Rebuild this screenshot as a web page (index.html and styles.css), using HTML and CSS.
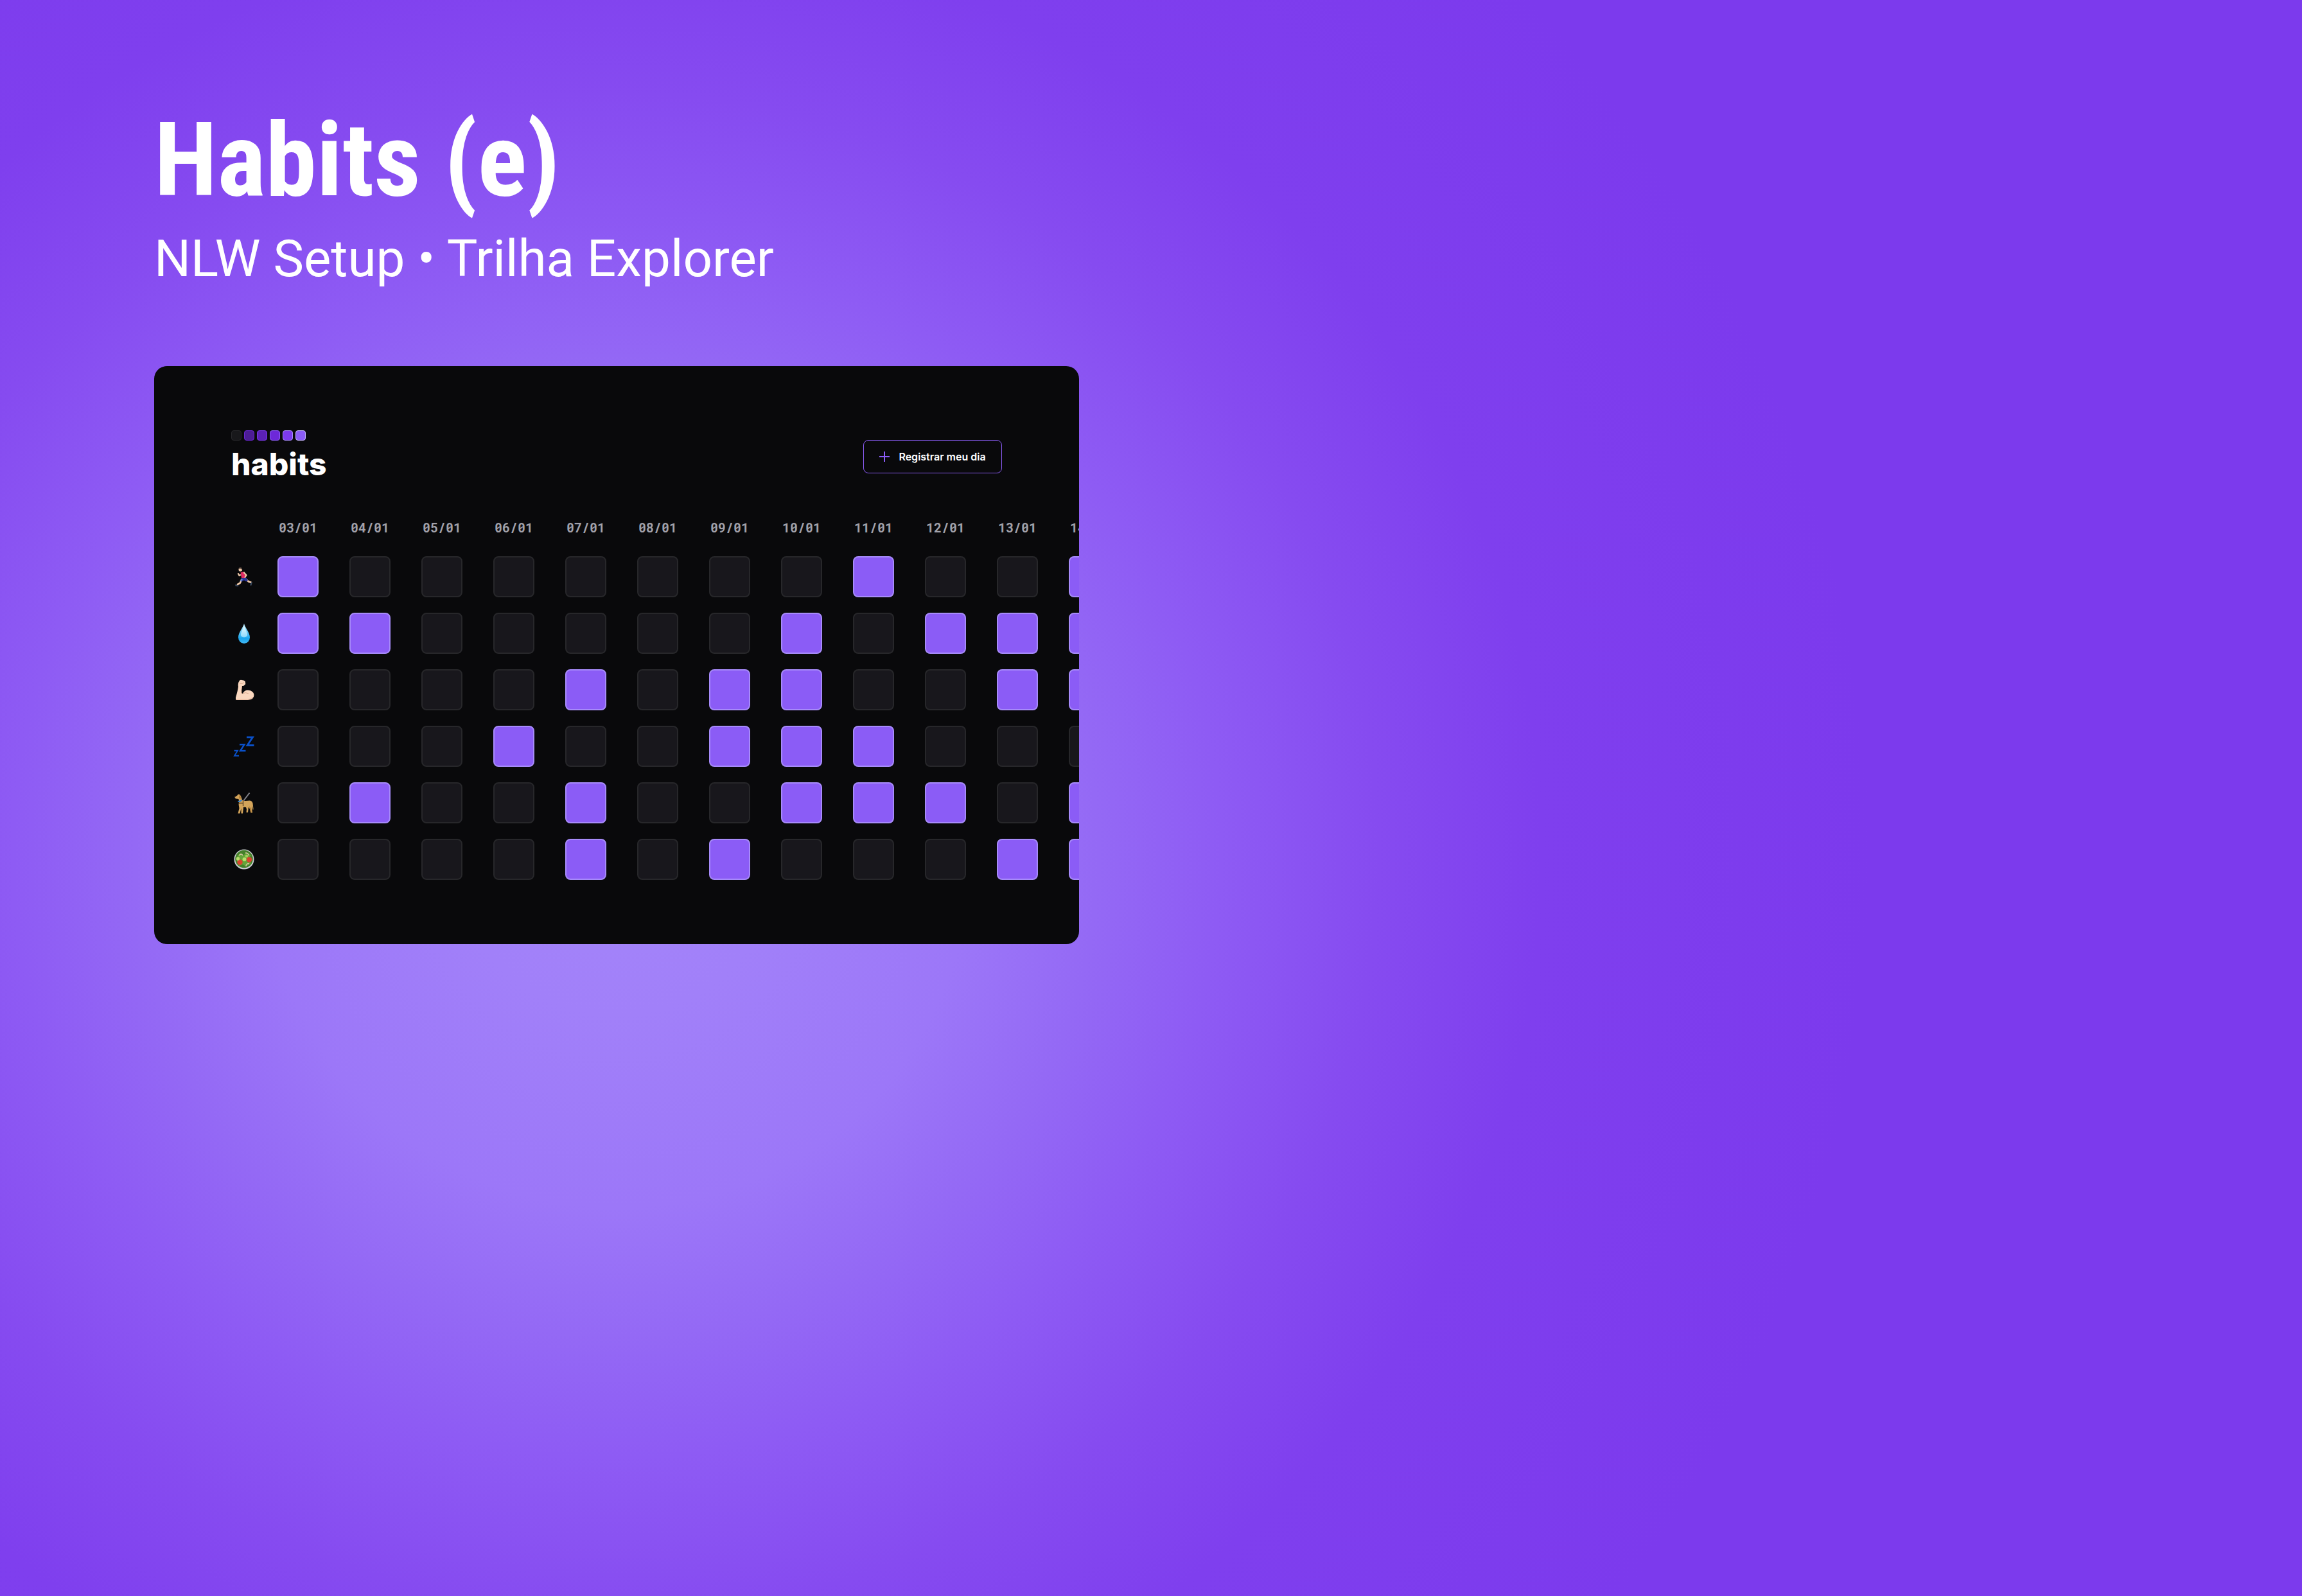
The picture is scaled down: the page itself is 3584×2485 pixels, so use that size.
FILE: index.html
```html
<!DOCTYPE html>
<html lang="pt-BR">
<head>
<meta charset="utf-8">
<title>Habits (e)</title>
<link rel="stylesheet" href="styles.css">
</head>
<body>
<main class="cover">
  <header class="intro">
    <h1 class="title">Habits (e)</h1>
    <p class="subtitle">NLW Setup • Trilha Explorer</p>
  </header>
  <section class="card">
    <div class="topbar">
      <div class="brand">
        <div class="levels" aria-hidden="true"><i class="level l0"></i><i class="level l1"></i><i class="level l2"></i><i class="level l3"></i><i class="level l4"></i><i class="level l5"></i></div>
        <div class="brand-name">habits</div>
      </div>
      <button class="register" type="button">
        <svg class="plus" viewBox="0 0 16 16" aria-hidden="true"><path d="M8 0v16M0 8h16"/></svg>
        Registrar meu dia
      </button>
    </div>
    <form class="tracker">
      <div class="icons" id="icons">
        <svg viewBox="0 -2 60 60" role="img" aria-label="Correr"><path d="M27 32l-3.500 6-4.500 2.500M33 32l4 3.500 4.500 1.500" fill="none" stroke="#f0c9a8" stroke-width="2.600"/><path d="M26 29.500l8 .5 2 4.500-3 1-3-2-4 2.500-1.500-2.500z" fill="#2a3495"/><path d="M25.500 31l2.500 1.500-2.500 3-2-1.500z" fill="#6c86c8"/><path d="M24.500 21.500l4.500-1.500 4 4.500-1 5.500h-6z" fill="#e02a64"/><path d="M25 25l-2.500 1-2-3.500M29.500 21l4 4.500-2.500 4" fill="none" stroke="#f0c9a8" stroke-width="2.200"/><circle cx="24.300" cy="17" r="2.800" fill="#f0c9a8"/><path d="M21 15.500q.500-2.500 3.500-2.500 3 .500 2.500 4l-2-1.500z" fill="#433630"/><path d="M16 40l5.500 1.500-.500 1.800-4.500-.800zM39.500 39l2-2.500 1.500-.500-1.500 5.500-1.500.500z" fill="#3a4a60"/></svg>
        <svg viewBox="0 0 60 60" role="img" aria-label="Beber água"><defs><linearGradient id="drop" x1="0" y1="0" x2="0" y2="1"><stop offset="0" stop-color="#bfeeff"/><stop offset=".45" stop-color="#5fc5f5"/><stop offset=".75" stop-color="#18a5ee"/><stop offset="1" stop-color="#45b8f3"/></linearGradient><linearGradient id="shine" x1="0" y1="0" x2="0" y2="1"><stop offset="0" stop-color="#eefcff"/><stop offset="1" stop-color="#8edafc"/></linearGradient></defs><path d="M30 15c2 7 9 14 9 21.500a9 9.500 0 0 1-18 0c0-7.500 7-14.500 9-21.500z" fill="url(#drop)"/><path d="M30 17c1 6 5 11 5 15.500 0 5-10 5-10 0 0-4.500 4-9.500 5-15.500z" fill="url(#shine)"/></svg>
        <svg viewBox="0 0 60 60" role="img" aria-label="Treinar"><path d="M22.500 16q2-2 4-1l3 .500q3 1 2.500 3.500 1 2-1 3.500-2 2-4 1.500-1.500 5-1 11l2 1q2-5.500 8-5.500 9 1 9.500 7.500 0 7.500-10 8H18q-1.500-1-1-4 3-10 4-17-1-5 1.500-8.500z" fill="#fad7bf"/><path d="M26.500 25q-1 6-.500 11M23 20l4 .500 3-2M37 36q-5-3-9 0" fill="none" stroke="#d9ab8e" stroke-width="1"/><path d="M18 45h18q5-.500 8-3.500" fill="none" stroke="#e7b396" stroke-width="1"/></svg>
        <svg viewBox="0 0 60 60" role="img" aria-label="Dormir" fill="none" stroke="#0a50c8"><path d="M34 15.800h9.500L35 28.500h10.500" stroke-width="2.800"/><path d="M23 27.200h7.500L24 37h8.500" stroke-width="2.400"/><path d="M14.500 36.800H20L15 44.800h7" stroke-width="1.900"/></svg>
        <svg viewBox="0 0 60 60" role="img" aria-label="Passear com o cachorro"><path d="M29 27l9.500-12.500" stroke="#85858c" stroke-width="2"/><path d="M15 20.500l4-1.500 1.500-2q3-1 4.500 2.500l2 6q2 2 5 1.500l7-.500q3.500.500 4.500 4l1 9q0 2-1 1l-1.500-6v4l1 7h-2.500l-1.500-6-3-4 1 .500-1 9h-2.500l.500-5-1-3-4-.500v1l-1 9h-2.500v-8l-2 8h-3l2-8q-1.500-6-.500-11l-.500-3.500-4.500-.500q-1.500-1-1.500-2.500z" fill="#d3a45a"/><path d="M22.500 18q2 0 2.500 4l-1 3-2-3zM38 35l3 4 .500 6h-1.500l-1-5z" fill="#b07c36"/><path d="M14.800 20.300h2" stroke="#33241a" stroke-width="1.600"/><path d="M20.500 28q4 0 6-2.500" stroke="#2c7fd0" stroke-width="1.800" fill="none"/><path d="M28.500 26v9M22 30.500h6" stroke="#5d4325" stroke-width="1.300"/></svg>
        <svg viewBox="0 0 60 60" role="img" aria-label="Comer salada"><circle cx="30" cy="30" r="15.500" fill="#c9ccd0"/><circle cx="30" cy="29.500" r="13.800" fill="#44802a"/><path d="M18 30q2-8 7-10l4 4 5-5 7 5-4 4 4 8-8 5-5-3-6 2z" fill="#64a538"/><path d="M22 24q4-4 6 0M32 20q5 0 5 4M33 41q0-5 5-4" fill="none" stroke="#d6c3a2" stroke-width="1.500"/><circle cx="23.500" cy="34.500" r="4.200" fill="#d8452e"/><circle cx="38" cy="30.500" r="4.200" fill="#d8452e"/><circle cx="20.500" cy="29" r="2.700" fill="#b7dd6b"/><circle cx="30.500" cy="30" r="3" fill="#b7dd6b"/><circle cx="34" cy="25" r="2.300" fill="#a3d05a"/></svg>
      </div>
      <div class="days" id="days"></div>
    </form>
  </section>
</main>
<script src="script.js"></script>
</body>
</html>
```

FILE: styles.css
```css
* {
  box-sizing: border-box;
  margin: 0;
}

body {
  min-height: 100vh;
  background: radial-gradient(
    circle at 960px 1330px,
    #a485fa 0,
    #a180f9 250px,
    #9c77f8 550px,
    #9469f5 750px,
    #8e5bf4 940px,
    #864bf0 1185px,
    #7f3fee 1440px,
    #7c3aed 1950px
  ) #7c3aed;
  color: #fff;
  font-family: Roboto, sans-serif;
}

.cover {
  padding: 160px 240px;
}

.title {
  font: 700 160px/180px "Roboto Condensed", Roboto, sans-serif;
}

.subtitle {
  margin-top: 16px;
  font-size: 80px;
  line-height: 94px;
}

.card {
  width: 100%;
  max-width: 1440px;
  margin-top: 120px;
  padding: 100px 0 100px 120px;
  border-radius: 20px;
  background: #09090b;
  overflow: hidden;
}

.topbar {
  display: flex;
  align-items: center;
  justify-content: space-between;
  padding-right: 120px;
}

.levels {
  display: flex;
  gap: 4px;
}

.level {
  width: 16px;
  height: 16px;
  border: 1px solid;
  border-radius: 4px;
}

.l0 { background: #18181b; border-color: #27272a; }
.l1 { background: #4c1d95; border-color: #6d28d9; }
.l2 { background: #5b21b6; border-color: #7c3aed; }
.l3 { background: #6d28d9; border-color: #8b5cf6; }
.l4 { background: #7c3aed; border-color: #a78bfa; }
.l5 { background: #8b5cf6; border-color: #c4b5fd; }

.brand-name {
  margin-top: 8px;
  font: 800 48px/58px Inter, sans-serif;
}

.register {
  display: flex;
  align-items: center;
  justify-content: center;
  gap: 14px;
  min-width: 216px;
  height: 52px;
  padding: 0 24px;
  border: 1px solid #8b5cf6;
  border-radius: 8px;
  background: none;
  color: #fff;
  font: 600 16px/24px Inter, sans-serif;
}

.plus {
  width: 16px;
  height: 16px;
  fill: none;
  stroke: #8b5cf6;
  stroke-width: 2;
}

.tracker {
  display: flex;
  gap: 32px;
  margin-top: 56px;
}

.icons,
.day {
  display: grid;
  grid-auto-rows: 64px;
  gap: 24px;
}

.icons {
  flex: none;
  align-content: start;
  align-items: center;
  padding-top: 58px;
}

.icons svg {
  width: 60px;
  height: 60px;
  margin: 0 -10px;
}

.days {
  display: flex;
  gap: 48px;
}

.day {
  flex: none;
  width: 64px;
  grid-template-rows: 34px;
}

.date {
  text-align: center;
  color: #a1a1aa;
  font: 700 20px/26px "Roboto Mono", "DejaVu Sans Mono", monospace;
}

.check {
  appearance: none;
  width: 64px;
  height: 64px;
  border: 2px solid #27272a;
  border-radius: 8px;
  background: #18171c;
}

.check:checked {
  border-color: #a78bfa;
  background: #8b5cf6;
}
```

FILE: script.js
```js
const habits = ["Correr", "Beber água", "Treinar", "Dormir", "Passear com o cachorro", "Comer salada"];

const log = {
  "03/01": "110000",
  "04/01": "010010",
  "05/01": "000000",
  "06/01": "000100",
  "07/01": "001011",
  "08/01": "000000",
  "09/01": "001101",
  "10/01": "011110",
  "11/01": "100110",
  "12/01": "010010",
  "13/01": "011001",
  "14/01": "111011"
};

const days = document.getElementById("days");

for (const date of Object.keys(log).sort()) {
  const day = document.createElement("div");
  day.className = "day";

  const label = document.createElement("div");
  label.className = "date";
  label.textContent = date;
  day.append(label);

  habits.forEach((habit, i) => {
    const check = document.createElement("input");
    check.type = "checkbox";
    check.className = "check";
    check.checked = log[date][i] === "1";
    check.setAttribute("aria-label", habit + " " + date);
    day.append(check);
  });

  days.append(day);
}
```
